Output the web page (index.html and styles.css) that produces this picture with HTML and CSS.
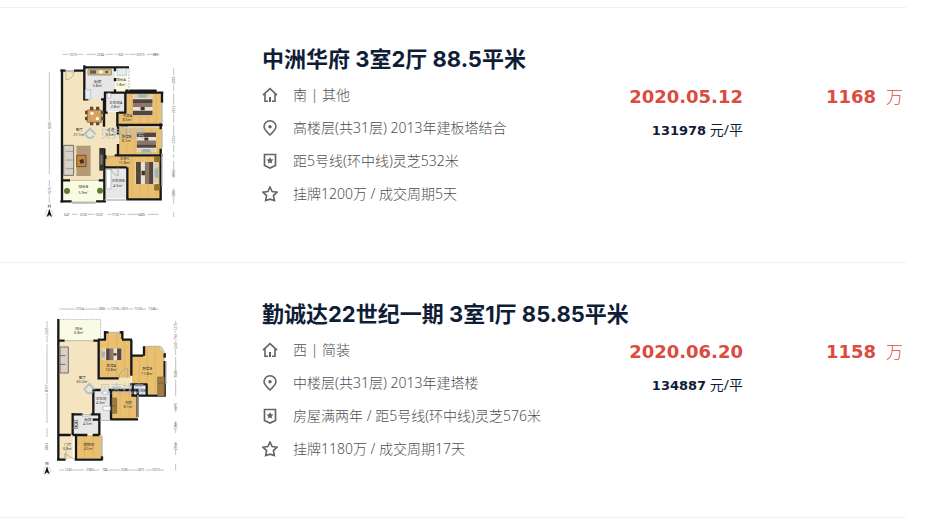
FILE: index.html
```
<!DOCTYPE html>
<html lang="zh-CN">
<head>
    <meta charset="UTF-8">
    <meta name="viewport" content="width=device-width, initial-scale=1.0">
    <title>成交房源</title>
    <link rel="stylesheet" href="styles.css">
</head>
<body>
    <svg class="sprite" aria-hidden="true">
        <symbol id="icon-house" viewBox="0 0 16 16">
            <path d="M1 8.2 8 1.6l7 6.6M3 7v7.2h3M13 7v7.2h-3" fill="none" stroke="currentColor" stroke-width="1.6"/>
            <path d="M7 10h2v5H7z" fill="currentColor"/>
        </symbol>
        <symbol id="icon-position" viewBox="0 0 16 16">
            <path d="M8 .8a6 6 0 0 1 6 6c0 2.600-2.400 4.800-6 8.200-3.600-3.400-6-5.600-6-8.200a6 6 0 0 1 6-6z" fill="none" stroke="currentColor" stroke-width="1.600"/>
            <circle cx="8" cy="6.800" r="1.700" fill="currentColor"/>
        </symbol>
        <symbol id="icon-badge" viewBox="0 0 16 16">
            <path d="M2.500 1.500h11v11L8 15l-5.500-2.500z" fill="none" stroke="currentColor" stroke-width="1.700"/>
            <path d="m8 4 1.100 2.200 2.400.3-1.800 1.700.5 2.400L8 9.400l-2.200 1.200.5-2.400-1.800-1.700 2.400-.3z" fill="currentColor"/>
        </symbol>
        <symbol id="icon-star" viewBox="0 0 16 16">
            <path d="m8 1 2.100 4.600 5 .6-3.700 3.400 1 5L8 13.200l-4.400 1.400 1-5L.9 6.200l5-.6z" fill="none" stroke="currentColor" stroke-width="1.600"/>
        </symbol>
        <!-- 双人床 -->
        <symbol id="bed" viewBox="0 0 60 70" preserveAspectRatio="none">
            <path d="M0 4h60v66H0z" fill="#e9e1d2"/>
            <path d="M0 18h60v12H0z" fill="#54443b"/>
            <path d="M0 30h60v12H0z" fill="#8b7768"/>
            <path d="M0 54h60v14H0z" fill="#54443b"/>
            <path d="M3 5h24v10H3zM33 5h24v10H33z" fill="#d8cdbb"/>
            <path d="M14 3h32L40 14H20z" fill="#9bb3bd"/>
            <path d="M24 42h12v10H24z" fill="#3e322c"/>
        </symbol>
        <symbol id="compass" viewBox="0 0 28 42">
            <path d="M11 10V1l6 8V0" fill="none" stroke="#555" stroke-width="2"/>
            <circle cx="14" cy="27" r="11" fill="#fff" stroke="#ccc" stroke-width="2"/>
            <path d="M14 14 22 38l-8-6-8 6z" fill="#111"/>
        </symbol>
        <symbol id="watermark" viewBox="0 0 200 50">
            <path d="M3 26 20 9l17 17" fill="none" stroke="#8fb2dd" stroke-width="6"/>
            <path d="M8 27a13 13 0 0 0 24 3" fill="none" stroke="#8fb2dd" stroke-width="6"/>
            <text class="mark" x="50" y="36">贝壳找房</text>
        </symbol>
    </svg>

    <ul class="deal-list">
        <li class="deal">
            <a class="plan" href="#" aria-label="中洲华府 户型图">
                <svg viewBox="0 0 480 570">
                    <g class="dims">
                        <path d="M98 43h18m26 0h18M170 43h28m28 0h24m4 0h8m24 0h8m2 0h28m26 0h18m2 0h18"/>
                        <path d="M58 97v145m0 30v130m0 18v20m0 26v22"/>
                        <path d="M431 85v20m0 30v18m0 8v34m0 26v26m0 8v34m0 26v22m0 6v10m0 10v52m0 30v22m0 6v18m0 26v14"/>
                        <path d="M126 523h16m32 0h20m38 0h12m26 0h16m6 0h32m30 0h32"/>
                        <text x="118" y="47">1675</text><text x="200" y="47">2284</text><text x="264" y="47">902</text><text x="321" y="47">2275</text><text x="368" y="47">685</text>
                        <text x="102" y="527">647</text><text x="149" y="527">2200</text><text x="196" y="527">1022</text><text x="245" y="527">1750</text><text x="323" y="527">3485</text>
                        <text transform="translate(62 268)rotate(-90)">9280</text><text transform="translate(62 464)rotate(-90)">1675</text>
                        <text transform="translate(435 132)rotate(-90)">2005</text><text transform="translate(435 220)rotate(-90)">2252</text><text transform="translate(435 311)rotate(-90)">2252</text><text transform="translate(435 412)rotate(-90)">3055</text><text transform="translate(435 473)rotate(-90)">1205</text>
                    </g>
                    <path class="hall" d="M97 92h66v85h60v82h38v-44h30v42h-30v88h-38v75H97z"/>
                    <path class="hall" d="M222 216h42v134h-42z"/>
                    <path class="balcony" d="M97 421h126v64H97z"/>
                    <path class="tile" d="M163 84h92v93h-92zM226 156h60v58h-60zM226 385h64v90h-64z"/>
                    <path class="balcony" d="M257 104h40v50h-40z"/>
                    <path class="wood" d="M286 158h110v97H262v-40h24zM266 262h130v80H266zM226 346h166v132H290v-96h-64z"/>
                    <path class="grain" d="M306 160v95M330 160v95M354 160v95M378 160v95M290 262v80M314 262v80M338 262v80M362 262v80M306 346v130M330 346v130M354 346v130M378 346v130"/>
                    <path class="wall" d="M91 92h16M132 92h30M96 88v400M91 484h34M198 484h30M163 76v102h12M163 82h134M255 82v12M255 114v10M255 148v8M222 158h178M286 152h94M225 156v62h8M286 156v62h-20M222 178v82M213 178h10M262 216v40h32M264 255h134M264 255v30M264 312v34M254 346h144M226 346v10M396 156v32M392 250v18M392 326v148M392 458v20H288M292 382v98M222 382h68M223 325v160M96 421h24M206 421h17"/>
                    <path class="window" d="M224 480h66M396 188v62M396 268v58M396 340v98M125 489h72M107 92h25"/>
                    <path class="rail" d="M297 84v68"/>
                    <path class="thin" d="M108 94v26a26 26 0 0 0 24-24zM120 421h86M122 486h78M264 258a26 26 0 0 1 26 25h-26M228 362a26 26 0 0 1 26-12M264 382v25a26 26 0 0 1-20-20" />
                    <path d="M174 88h70v17h-70z" fill="#d5bd7b" stroke="#7c7258" stroke-width="2"/>
                    <path d="M180 91h18v10h-18z" fill="#61584e"/><path d="M207 91h12v9h-12z" fill="#f6f2dc"/><circle cx="230" cy="96" r="4" fill="#504e40"/>
                    <path d="M166 149h16v28h-16zM262 86h28v20h-28z" fill="#e5edf2" stroke="#a9b8bf" stroke-width="2"/>
                    <use href="#bed" x="308" y="160" width="60" height="68"/>
                    <use href="#bed" transform="translate(378 346)rotate(180)" y="6" width="58" height="64"/>
                    <use href="#bed" transform="translate(388 366)rotate(90)" width="66" height="72"/>
                    <g fill="#ab8337" stroke="#6b4e20" stroke-width="2"><path d="M374 350h16v15h-16zM374 434h16v16h-16z"/><circle cx="382" cy="357" r="4"/><circle cx="382" cy="442" r="4"/></g>
                    <g fill="#5d4a3f"><path d="M180 200h10v11h-10zM198 200h10v11h-10zM180 245h10v11h-10zM198 245h10v11h-10zM165 212h10v11h-10zM165 230h10v11h-10zM211 212h10v11h-10zM211 230h10v11h-10z"/></g>
                    <path d="M172 210h42v37h-42z" fill="#d8a15d" stroke="#6f5138" stroke-width="2"/>
                    <circle cx="186" cy="220" r="5" fill="#fff"/><circle cx="202" cy="236" r="5" fill="#fff"/>
                    <path d="M139 317h43v91h-43z" fill="#b59a78"/><path d="M101 316h30v90h-30z" fill="#d9d2c8" stroke="#756c65" stroke-width="3"/>
                    <path d="M107 334h23M107 360h23M107 386h23" stroke="#877c73" stroke-width="2"/><path d="M140 346h28v34h-28z" fill="#c7843a" stroke="#4e382a" stroke-width="2"/><path d="m148 360 12-3 2 12-10 2z" fill="#303237"/>
                    <path d="M208 324h14v68h-14z" fill="#333332"/><path d="M211 344h7v30h-7z" fill="#777"/>
                    <circle cx="111" cy="453" r="9" fill="#607b36"/><circle cx="210" cy="452" r="9" fill="#607b36"/>
                    <path d="M229 389h14v58h-14zM232 160h10v14h-10z" fill="#fff" stroke="#a3a9ad" stroke-width="2"/>
                    <use class="faded" href="#watermark" x="160" y="257" width="200" height="50"/>
                    <g class="room">
                        <text x="203" y="128">厨房</text><text x="203" y="141">5.8m²</text><text x="273" y="124">阳台A</text><text x="273" y="137">1.8m²</text>
                        <text x="257" y="191">卫生间A</text><text x="257" y="204">2.8m²</text><text x="292" y="230">书房A</text><text x="292" y="243">8.5m²</text>
                        <text x="148" y="274">客厅</text><text x="148" y="287">27.1m²</text><text x="242" y="274">过道</text><text x="242" y="287">3.5m²</text><text x="290" y="293">卧室B</text><text x="290" y="306">8.1m²</text>
                        <text x="284" y="360">主卧C</text><text x="284" y="373">11.8m²</text><text x="160" y="445">阳台B</text><text x="160" y="462">5.9m²</text><text x="264" y="427">卫生间B</text><text x="264" y="441">4.5m²</text>
                    </g>
                    <use href="#compass" x="44" y="493" width="28" height="42"/>
                </svg>
            </a>
            <div class="content">
                <h2 class="title"><a href="#">中洲华府 3室2厅 88.5平米</a></h2>
                <div class="info">
                    <ul class="details">
                        <li><svg class="icon"><use href="#icon-house"/></svg>南 | 其他</li>
                        <li><svg class="icon"><use href="#icon-position"/></svg>高楼层(共31层) 2013年建板塔结合</li>
                        <li><svg class="icon"><use href="#icon-badge"/></svg>距5号线(环中线)灵芝532米</li>
                        <li><svg class="icon"><use href="#icon-star"/></svg>挂牌1200万 / 成交周期5天</li>
                    </ul>
                    <div class="unit">
                        <div class="date">2020.05.12</div>
                        <div class="unit-price"><b>131978</b> 元/平</div>
                    </div>
                    <div class="total"><b>1168</b><span>万</span></div>
                </div>
            </div>
        </li>

        <li class="deal">
            <a class="plan" href="#" aria-label="勤诚达22世纪一期 户型图">
                <svg viewBox="0 0 480 570">
                    <g class="dims">
                        <path d="M88 42h48m24 0h46m24 0h12m20 0h14m20 0h14m22 0h16m22 0h14"/>
                        <path d="M51 78v18m0 26v20m0 6v120m0 26v90m0 16v26m0 26v12"/>
                        <path d="M437 78v8m0 22v6m0 22v6m0 22v16m0 6v44m0 24v50m0 24v24m0 26v18m0 6v12m0 26v14m0 8v18m0 26v20"/>
                        <path d="M88 525h14m24 0h36m26 0h20m28 0h34m26 0h32m20 0h20m20 0h14"/>
                        <text x="138" y="46">3754</text><text x="208" y="46">886</text><text x="243" y="46">1375</text><text x="277" y="46">855</text><text x="313" y="46">1525</text><text x="355" y="46">1345</text>
                        <text x="104" y="529">1245</text><text x="168" y="529">2385</text><text x="216" y="529">784</text><text x="272" y="529">2585</text><text x="326" y="529">875</text><text x="366" y="529">1675</text>
                        <text transform="translate(55 120)rotate(-90)">2245</text><text transform="translate(55 292)rotate(-90)">8097</text><text transform="translate(55 466)rotate(-90)">2354</text>
                        <text transform="translate(441 107)rotate(-90)">1275</text><text transform="translate(441 135)rotate(-90)">794</text><text transform="translate(441 165)rotate(-90)">1245</text><text transform="translate(441 248)rotate(-90)">3685</text><text transform="translate(441 346)rotate(-90)">2275</text><text transform="translate(441 405)rotate(-90)">1385</text><text transform="translate(441 466)rotate(-90)">2354</text>
                    </g>
                    <path class="balcony" d="M88 78h122v57H88z"/>
                    <path class="hall" d="M86 137h120v112h98v36H190v70h-62v137H86z"/>
                    <path class="wood" d="M208 134h20v-20h48v20h26v114h-94zM306 182h36v-28h46l16 24v120h-52v-28h-46zM245 286h78v86h-78zM140 420h76v70h-76z"/>
                    <path class="grain" d="M234 116v130M260 116v130M284 134v114M328 184v84M352 156v142M376 156v142M270 286v86M298 286v86M164 420v70M190 420v70"/>
                    <path class="tile" d="M190 287h52v86h-52zM130 358h76v60h-76zM306 274h42v24h-42z"/>
                    <path class="wall" d="M85 72v424M81 494h26M134 494h84M82 137h22M190 137h18M206 134v116h60M204 134h24M276 134h30M225 108v24M277 108v24M224 112h12M268 112h12M304 134v50M302 182h38M342 154v28M304 182v60M300 268h52M350 268v32M308 268v32M404 174v14M404 198v104H304M188 285h24M236 285h90M190 285v74M243 285v90M323 288v78M188 374h24M240 373h84M128 358v-4M128 358h30M182 358h26v62M128 358v62M86 420h36M128 420h44M188 420h20M138 420v72M216 484v10"/>
                    <path class="window" d="M236 112h34M348 154h40q12 4 14 22M324 300v68M210 376h32M216 424v60M408 198v70"/>
                    <path class="rail" d="M88 74h124v58"/>
                    <path class="thin" d="M104 137h86M268 248a25 25 0 0 1 25-27v27M104 492v-16l28 16M108 466v26M128 400h12M154 358h30"/>
                    <path d="M90 156h25v78H90z" fill="#d8d0c6" stroke="#786e65" stroke-width="3"/><path d="M90 182h16M90 208h16" stroke="#786e65" stroke-width="3"/>
                    <use href="#bed" transform="translate(212 196)rotate(-90)" width="36" height="64"/>
                    <path d="M383 246h20v58h-20zM246 309h14v46h-14z" fill="#a37b42" stroke="#77623f" stroke-width="2"/><path d="M385 264h16M248 332h10" stroke="#68502e" stroke-width="2"/>
                    <path d="M132 376h11v24h-11z" fill="#d9dbdc" stroke="#606568" stroke-width="2"/><circle cx="138" cy="383" r="3" fill="#555"/><circle cx="138" cy="394" r="3" fill="#555"/>
                    <path d="M219 334h22v12h-22zM218 288h17v10h-17zM158 360h20v5h-20z" fill="#fff" stroke="#a7afb5" stroke-width="2"/>
                    <use class="faded" href="#watermark" x="158" y="258" width="200" height="50"/>
                    <g class="room">
                        <text x="147" y="106">阳台</text><text x="147" y="118">6.8m²</text><text x="244" y="215">卧室A</text><text x="244" y="228">10.8m²</text><text x="352" y="226">卧室B</text><text x="352" y="239">11.8m²</text>
                        <text x="157" y="251">客厅</text><text x="157" y="263">30.2m²</text><text x="213" y="314">卫生间</text><text x="213" y="326">4.0m²</text><text x="295" y="326">书房</text><text x="295" y="338">8.1m²</text><text x="328" y="290">卫生间B</text>
                        <text x="174" y="379">厨房</text><text x="174" y="391">4.5m²</text><text x="113" y="452">门厅</text><text x="113" y="465">3.8m²</text><text x="176" y="452">储物间</text><text x="176" y="465">4.5m²</text>
                    </g>
                    <use href="#compass" x="37" y="500" width="28" height="42"/>
                </svg>
            </a>
            <div class="content">
                <h2 class="title"><a href="#">勤诚达22世纪一期 3室1厅 85.85平米</a></h2>
                <div class="info">
                    <ul class="details">
                        <li><svg class="icon"><use href="#icon-house"/></svg>西 | 简装</li>
                        <li><svg class="icon"><use href="#icon-position"/></svg>中楼层(共31层) 2013年建塔楼</li>
                        <li><svg class="icon"><use href="#icon-badge"/></svg>房屋满两年 / 距5号线(环中线)灵芝576米</li>
                        <li><svg class="icon"><use href="#icon-star"/></svg>挂牌1180万 / 成交周期17天</li>
                    </ul>
                    <div class="unit">
                        <div class="date">2020.06.20</div>
                        <div class="unit-price"><b>134887</b> 元/平</div>
                    </div>
                    <div class="total"><b>1158</b><span>万</span></div>
                </div>
            </div>
        </li>
    </ul>
</body>
</html>
```
FILE: styles.css
```
:root {
    --title-color: #101d37;
    --text-color: #4c5054;
    --icon-color: #616569;
    --accent-color: #db4c3f;
    --line-color: #f0f0f0;
}

* {
    margin: 0;
    padding: 0;
    box-sizing: border-box;
}

body {
    font-family: "Noto Sans", "Noto Sans CJK SC", sans-serif;
    font-size: 14px;
    color: var(--text-color);
    background-color: #fff;
}

ul {
    list-style: none;
}

a {
    color: inherit;
    text-decoration: none;
}

.sprite {
    display: block;
    width: 0;
    height: 0;
}

.deal-list {
    margin: 7px 45px 0 0;
    border-top: 1px solid var(--line-color);
}

.deal {
    display: flex;
    padding: 32px 3px 32px 30px;
    border-bottom: 1px solid var(--line-color);
}

.plan {
    flex: none;
    width: 160px;
    margin-right: 72px;
}

.plan svg {
    display: block;
    width: 100%;
}

.content {
    flex: 1;
}

.title {
    font-family: Inter, "Noto Sans CJK SC", sans-serif;
    font-size: 22px;
    line-height: 38px;
    color: var(--title-color);
}

.info {
    display: flex;
}

.details {
    flex: 1;
}

.details li {
    display: flex;
    align-items: center;
    line-height: 33px;
    font-weight: 300;
}

.icon {
    width: 16px;
    height: 16px;
    margin-right: 15px;
    color: var(--icon-color);
}

.unit {
    padding-top: 2px;
    line-height: 33px;
    text-align: right;
}

.date,
.unit-price b,
.total b {
    font-family: "DejaVu Sans", sans-serif;
    font-weight: bold;
}

.date {
    font-size: 18px;
    color: var(--accent-color);
}

.unit-price {
    color: var(--title-color);
}

.unit-price b {
    font-size: 13px;
}

.total {
    width: 160px;
    padding-top: 2px;
    line-height: 33px;
    text-align: right;
    color: var(--accent-color);
}

.total b {
    font-size: 18px;
}

.total span {
    margin-left: 10px;
    font-size: 17px;
    font-weight: 300;
}

/* floor plans */
.dims path {
    fill: none;
    stroke: #a5a5a5;
    stroke-width: 2;
}

.dims text {
    font-size: 10px;
    fill: #666;
}

.room text {
    font-size: 11px;
    text-anchor: middle;
    fill: #333;
}

.mark {
    font-size: 34px;
    fill: #a4bcd8;
}

.faded {
    opacity: 0.7;
}

.hall {
    fill: #f4e5c0;
}

.balcony {
    fill: #fafbe3;
}

.tile {
    fill: #e7e7e7;
}

.wood {
    fill: #e9c070;
}

.grain {
    fill: none;
    stroke: #dcae5c;
    stroke-width: 2;
}

.wall {
    fill: none;
    stroke: #171717;
    stroke-width: 7;
}

.window {
    fill: none;
    stroke: #b7b9bb;
    stroke-width: 4;
}

.rail {
    fill: none;
    stroke: #b7b9bb;
    stroke-width: 3;
    stroke-dasharray: 6 3;
}

.thin {
    fill: none;
    stroke: #a39c8c;
    stroke-width: 2;
}
```
